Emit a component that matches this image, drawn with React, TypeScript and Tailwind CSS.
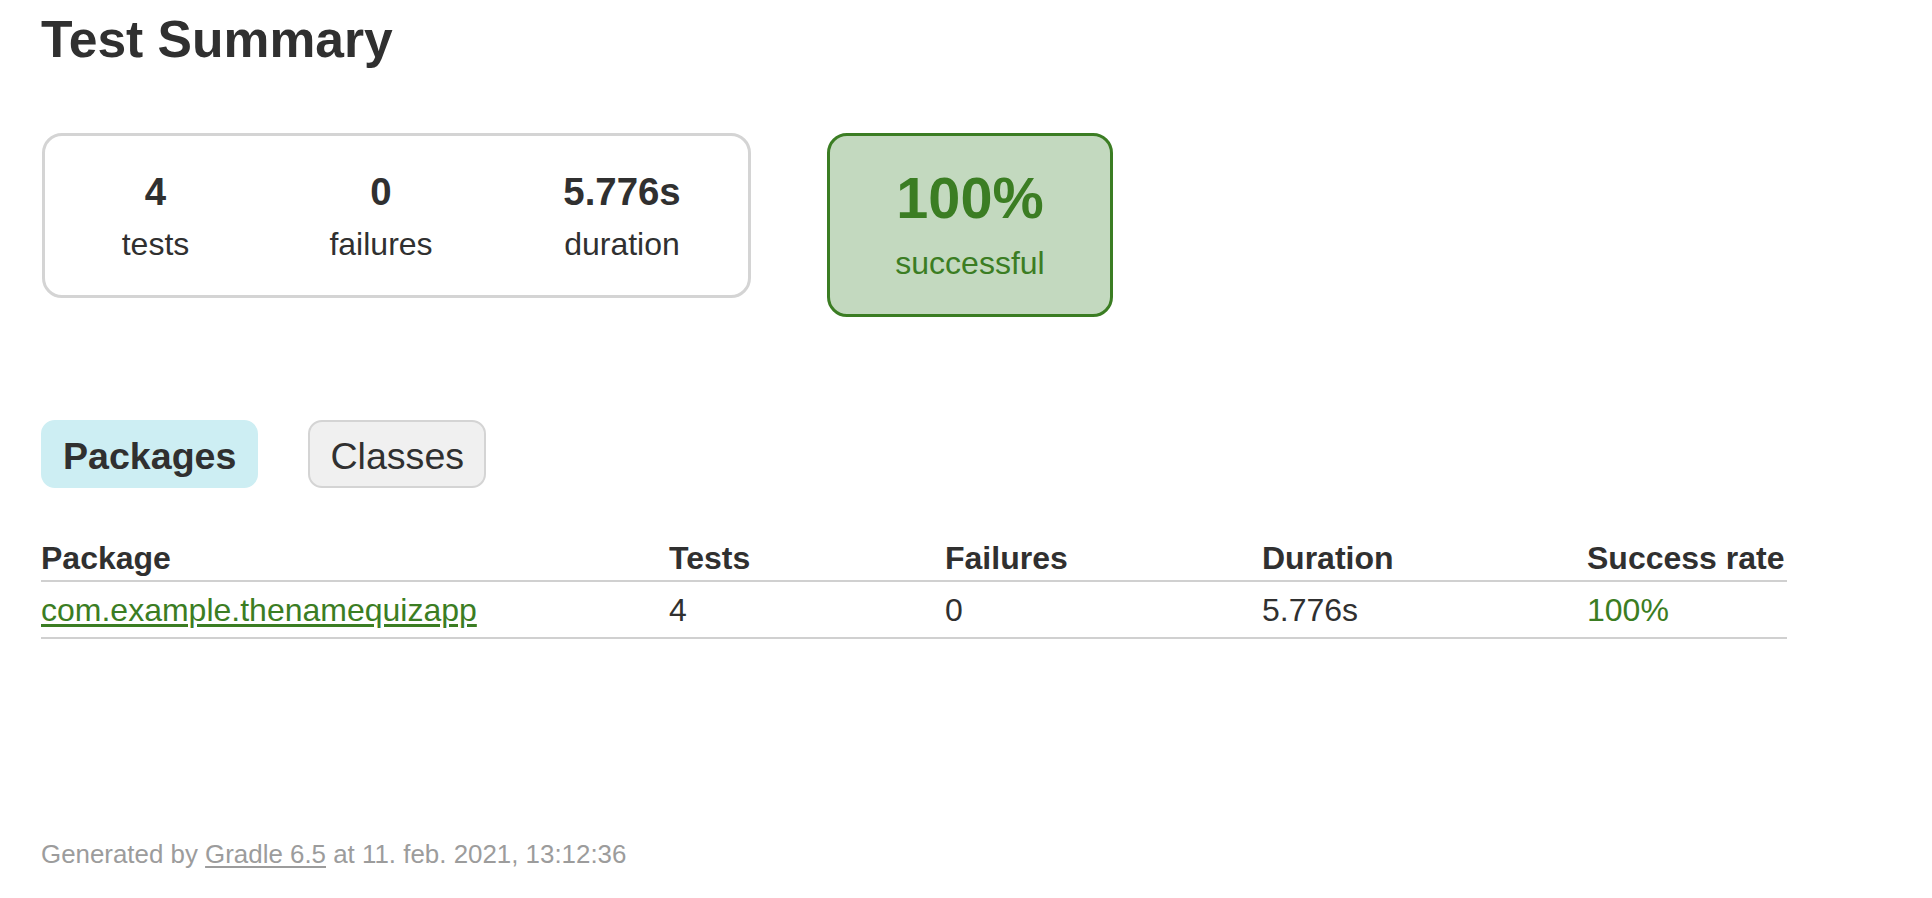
const rows = [
  { name: "com.example.thenamequizapp", tests: 4, failures: 0, duration: "5.776s", rate: "100%" },
];

const Counter = ({ value, label, width }: { value: string; label: string; width: string }) => (
  <div className={`${width} flex flex-col items-center`}>
    <div className="text-[38.4px] leading-[44px] font-bold">{value}</div>
    <div className="mt-[12px] text-[32px] leading-[37px]">{label}</div>
  </div>
);

export default function App() {
  return (
    <div
      className="min-h-screen bg-white pl-[41px] pt-[9px] text-[#303030]"
      style={{ fontFamily: '"Liberation Sans", Arial, sans-serif' }}
    >
      <h1 className="text-[51.6px] leading-[60px] font-bold">Test Summary</h1>

      {/* summary */}
      <div className="mt-[64px] flex items-start">
        <div className="ml-[1px] flex rounded-[20px] border-[3px] border-[#d4d4d4] pt-[34px] pb-[32px]">
          <Counter value="4" label="tests" width="w-[221px]" />
          <Counter value="0" label="failures" width="w-[230px]" />
          <Counter value="5.776s" label="duration" width="w-[252px]" />
        </div>
        <div className="ml-[76px] flex w-[286px] flex-col items-center rounded-[20px] border-[3px] border-[#3b7d23] bg-[#c3d9bf] pt-[29px] pb-[32px] text-[#3b7d23]">
          <div className="text-[57.6px] leading-[66px] font-bold">100%</div>
          <div className="mt-[14px] text-[32px] leading-[37px]">successful</div>
        </div>
      </div>

      {/* tabs */}
      <div className="mt-[103px] flex">
        <div className="mr-[50px] rounded-[14px] border-2 border-[#cdeef3] bg-[#cdeef3] px-[20px] pt-[12px] pb-[8px] text-[37.6px] leading-[44px] font-bold">
          Packages
        </div>
        <div className="rounded-[14px] border-2 border-[#d4d4d4] bg-[#f0f0f0] px-[20px] pt-[12px] pb-[8px] text-[37.6px] leading-[44px]">
          Classes
        </div>
      </div>

      {/* packages table */}
      <table className="mt-[52px] w-[1746px] table-fixed border-collapse text-[32px] leading-[37px]">
        <colgroup>
          <col className="w-[628px]" />
          <col className="w-[276px]" />
          <col className="w-[317px]" />
          <col className="w-[325px]" />
          <col className="w-[200px]" />
        </colgroup>
        <thead>
          <tr className="border-b-2 border-[#d0d0d0] text-left">
            <th className="pb-[3px] font-bold">Package</th>
            <th className="pb-[3px] font-bold">Tests</th>
            <th className="pb-[3px] font-bold">Failures</th>
            <th className="pb-[3px] font-bold">Duration</th>
            <th className="pb-[3px] font-bold">Success rate</th>
          </tr>
        </thead>
        <tbody>
          {rows.map((r) => (
            <tr key={r.name} className="border-b-2 border-[#d0d0d0]">
              <td className="pt-[10px] pb-[8px]">
                <a href="#" className="text-[#3b7d23] underline underline-offset-[3px]">
                  {r.name}
                </a>
              </td>
              <td className="pt-[10px] pb-[8px]">{r.tests}</td>
              <td className="pt-[10px] pb-[8px]">{r.failures}</td>
              <td className="pt-[10px] pb-[8px]">{r.duration}</td>
              <td className="pt-[10px] pb-[8px] text-[#3b7d23]">{r.rate}</td>
            </tr>
          ))}
        </tbody>
      </table>

      <p className="mt-[200px] text-[25.9px] leading-[30px] text-[#9c9c9c]">
        Generated by{" "}
        <a href="#" className="underline underline-offset-[3px]">
          Gradle 6.5
        </a>{" "}
        at 11. feb. 2021, 13:12:36
      </p>
    </div>
  );
}
